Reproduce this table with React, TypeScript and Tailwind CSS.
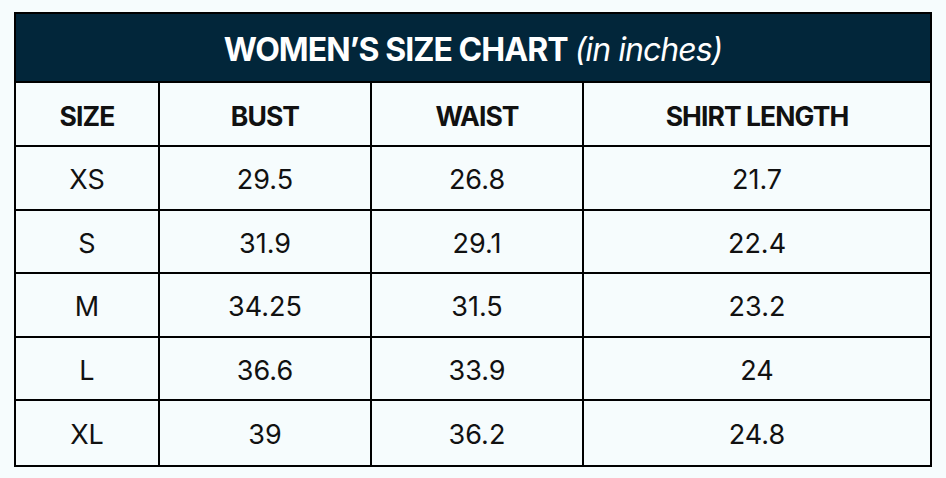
const rows = [
  ['XS', '29.5', '26.8', '21.7'],
  ['S', '31.9', '29.1', '22.4'],
  ['M', '34.25', '31.5', '23.2'],
  ['L', '36.6', '33.9', '24'],
  ['XL', '39', '36.2', '24.8'],
];

const heads = ['SIZE', 'BUST', 'WAIST', 'SHIRT LENGTH'];

export default function App() {
  return (
    <div className="w-[946px] h-[478px] bg-[#f6fcfd] pt-[12px] pl-[14px] font-['Inter',sans-serif] text-[#111]">
      <div className="w-[918px] border-2 border-black">
        <div className="h-[69px] pt-[4px] bg-[#02263a] border-b-2 border-black flex items-center justify-center text-white text-[32px] tracking-[-0.03em]">
          <span className="font-bold">WOMEN’S SIZE CHART</span>
          <span className="italic ml-[7px] font-normal">(in inches)</span>
        </div>
        <div className="grid grid-cols-[144px_212px_212px_1fr]">
          {heads.map((h, i) => (
            <div
              key={h}
              className={`h-[64px] pt-[5px] flex items-center justify-center border-b-2 border-black font-bold text-[26.5px] tracking-[-0.035em] ${i < 3 ? 'border-r-2' : ''}`}
            >
              {h}
            </div>
          ))}
          {rows.map((r, ri) =>
            r.map((c, ci) => (
              <div
                key={`${ri}-${ci}`}
                className={`h-[63.6px] pt-[5px] flex items-center justify-center text-[27px] border-black ${ci < 3 ? 'border-r-2' : ''} ${ri < 4 ? 'border-b-2' : ''}`}
              >
                {c}
              </div>
            ))
          )}
        </div>
      </div>
    </div>
  );
}
